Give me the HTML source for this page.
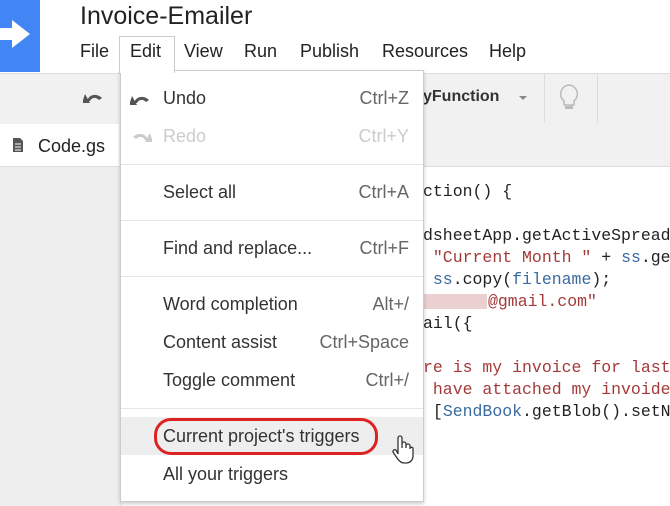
<!DOCTYPE html>
<html><head><style>
body{margin:0;width:670px;height:506px;overflow:hidden;position:relative;font-family:"Liberation Sans",sans-serif;background:#fff}
.a{position:absolute}
.mi{position:absolute;left:163px;font-size:18px;color:#333;white-space:nowrap}
.sc{position:absolute;right:14px;font-size:18px;color:#666}
.sep{position:absolute;left:0;right:0;height:1px;background:#e6e6e6}
.code{position:absolute;left:423px;font-family:"Liberation Mono",monospace;font-size:16.5px;color:#222;white-space:pre}
.r{color:#a33a3a}.b{color:#3a6aa0}
</style></head><body>
<div class="a" style="left:0;top:0;width:40px;height:72px;background:#4285f4"></div>
<svg class="a" style="left:0;top:16px" width="40" height="36"><path d="M0 12h12V4l18 14-18 14V24H0z" fill="#fff"/></svg>
<div class="a" style="left:80px;top:2px;font-size:25px;color:#222">Invoice-Emailer</div>
<div class="a" style="left:80px;top:41px;font-size:18px;color:#222">File</div>
<div class="a" style="left:119px;top:36px;width:54px;height:36px;border:1px solid #ccc;border-bottom:none;background:#fff;z-index:3"></div>
<div class="a" style="left:130px;top:41px;font-size:18px;color:#222;z-index:4">Edit</div>
<div class="a" style="left:184px;top:41px;font-size:18px;color:#222">View</div>
<div class="a" style="left:244px;top:41px;font-size:18px;color:#222">Run</div>
<div class="a" style="left:300px;top:41px;font-size:18px;color:#222">Publish</div>
<div class="a" style="left:382px;top:41px;font-size:18px;color:#222">Resources</div>
<div class="a" style="left:489px;top:41px;font-size:18px;color:#222">Help</div>
<div class="a" style="left:0;top:73px;width:670px;height:50px;background:#f1f1f1;border-top:1px solid #ddd;border-bottom:1px solid #ddd"></div>
<svg class="a" style="left:83px;top:89px" width="22" height="16"><path d="M4 12C6 5 14 4 19 9l-3 2C13 8 9 8 7 12z M2 5l5 9-8 0z" fill="#555"/></svg>
<div class="a" style="left:423px;top:88px;font-size:16px;font-weight:bold;color:#333">yFunction</div>
<div class="a" style="left:519px;top:96px;border:4px solid transparent;border-top:4px solid #888"></div>
<div class="a" style="left:544px;top:74px;width:1px;height:49px;background:#ddd"></div>
<svg class="a" style="left:556px;top:83px" width="26" height="30"><path d="M13 2a9 9 0 0 0-5 16v4h10v-4a9 9 0 0 0-5-16z" fill="none" stroke="#bbb" stroke-width="1.5"/><rect x="9" y="23" width="8" height="3" fill="#bbb"/></svg>
<div class="a" style="left:597px;top:74px;width:1px;height:49px;background:#ddd"></div>
<div class="a" style="left:0;top:124px;width:670px;height:42px;background:#f1f1f1;border-bottom:1px solid #ddd"></div>
<div class="a" style="left:0;top:124px;width:119px;height:42px;background:#fff"></div>
<svg class="a" style="left:12px;top:137px" width="12" height="16"><path d="M1 1h7l3 3v11H1z" fill="#555"/><path d="M3 7h6M3 10h6M3 13h6" stroke="#fff"/></svg>
<div class="a" style="left:38px;top:136px;font-size:18px;color:#222">Code.gs</div>
<div class="a" style="left:0;top:167px;width:122px;height:339px;background:#eee"></div>
<div class="code" style="top:182px">ction() {</div>
<div class="code" style="top:226px">dsheetApp.getActiveSpread</div>
<div class="code" style="top:248px"> <span class="r">"Current Month "</span> + <span class="b">ss</span>.ge</div>
<div class="code" style="top:270px"> <span class="b">ss</span>.copy(<span class="b">filename</span>);</div>
<div class="a" style="left:423px;top:294px;width:64px;height:15px;background:#ead0d0"></div>
<div class="code r" style="top:292px;left:488px">@gmail.com"</div>
<div class="code" style="top:314px">ail({</div>
<div class="code r" style="top:358px">re is my invoice for last</div>
<div class="code r" style="top:380px"> have attached my invoide</div>
<div class="code" style="top:402px"> [<span class="b">SendBook</span>.getBlob().setN</div>
<div class="a" style="left:120px;top:70px;width:302px;height:430px;background:#fff;border:1px solid #ccc;box-shadow:0 2px 4px rgba(0,0,0,.2);z-index:2">
<svg class="a" style="left:9px;top:20px" width="22" height="16"><path d="M4 12C6 5 14 4 19 9l-3 2C13 8 9 8 7 12z M2 5l5 9-8 0z" fill="#555"/></svg>
<svg class="a" style="left:9px;top:57px" width="22" height="16"><path d="M18 12C16 5 8 4 3 9l3 2C9 8 13 8 15 12z M20 5l-5 9 8 0z" fill="#ccc"/></svg>
<div class="mi" style="left:42px;top:17px">Undo</div><div class="sc" style="top:17px">Ctrl+Z</div>
<div class="mi" style="left:42px;top:55px;color:#ccc">Redo</div><div class="sc" style="top:55px;color:#ccc">Ctrl+Y</div>
<div class="sep" style="top:93px"></div>
<div class="mi" style="left:42px;top:111px">Select all</div><div class="sc" style="top:111px">Ctrl+A</div>
<div class="sep" style="top:149px"></div>
<div class="mi" style="left:42px;top:167px">Find and replace...</div><div class="sc" style="top:167px">Ctrl+F</div>
<div class="sep" style="top:205px"></div>
<div class="mi" style="left:42px;top:223px">Word completion</div><div class="sc" style="top:223px">Alt+/</div>
<div class="mi" style="left:42px;top:261px">Content assist</div><div class="sc" style="top:261px">Ctrl+Space</div>
<div class="mi" style="left:42px;top:299px">Toggle comment</div><div class="sc" style="top:299px">Ctrl+/</div>
<div class="sep" style="top:337px"></div>
<div class="a" style="left:0;top:346px;width:302px;height:38px;background:#eee"></div>
<div class="a" style="left:33px;top:347px;width:218px;height:31px;border:3px solid #d22;border-radius:17px"></div>
<div class="mi" style="left:42px;top:355px">Current project's triggers</div>
<div class="mi" style="left:42px;top:393px">All your triggers</div>
<svg class="a" style="left:270px;top:363px" width="24" height="32"><path d="M7 20V4a2 2 0 0 1 4 0v10V10a2 2 0 0 1 4 0v4-2a2 2 0 0 1 4 0v3-1a2 2 0 0 1 3 0v8c0 4-3 7-7 7h-2c-3 0-5-2-7-5l-4-6a2 2 0 0 1 3-2z" fill="#fff" stroke="#333" stroke-width="1.3"/></svg>
</div>
</body></html>
